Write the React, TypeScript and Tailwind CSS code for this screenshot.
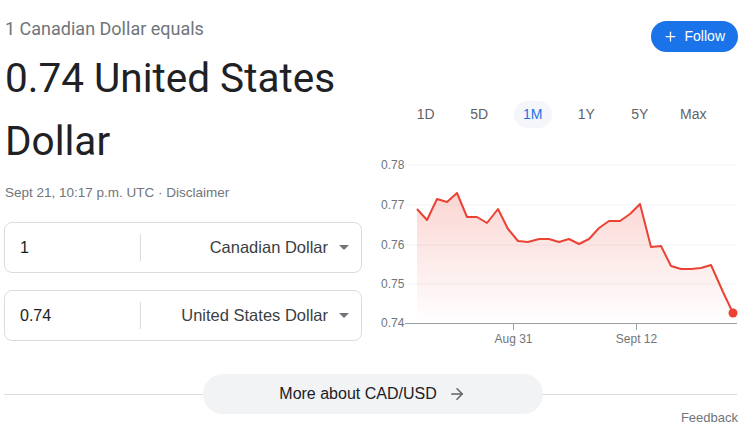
import { Plus, ArrowRight } from 'lucide-react';

const points: [number, number][] = [
  [417, 209], [427, 220], [437, 199], [447, 202], [457, 193], [467, 217],
  [477, 217], [487, 223], [498, 209], [508, 229], [518, 241], [528, 242],
  [539, 239], [549, 239], [559, 242], [569, 239], [579, 244], [589, 239],
  [599, 228], [609, 221], [620, 221], [630, 214], [640, 204], [651, 247],
  [661, 246], [671, 266], [681, 269], [691, 269], [701, 268], [711, 265],
  [723, 292], [733, 313],
];

const ranges = ['1D', '5D', '1M', '1Y', '5Y', 'Max'];

const Chart = () => {
  // svg origin sits at page (370,150)
  const pts = points.map(([x, y]) => [x - 370, y - 150]);
  const line = pts.map(([x, y], i) => `${i ? 'L' : 'M'}${x},${y}`).join(' ');
  const area = `${line} L${pts[pts.length - 1][0]},173 L${pts[0][0]},173 Z`;
  const grid = [
    { label: '0.78', y: 15 },
    { label: '0.77', y: 55 },
    { label: '0.76', y: 95 },
    { label: '0.75', y: 134 },
  ];
  return (
    <svg width="381" height="200" viewBox="0 0 381 200" className="block">
      <defs>
        <linearGradient id="fade" x1="0" y1="0" x2="0" y2="1">
          <stop offset="0" stopColor="#ea4335" stopOpacity="0.22" />
          <stop offset="1" stopColor="#ea4335" stopOpacity="0" />
        </linearGradient>
      </defs>
      {grid.map((g) => (
        <g key={g.label}>
          <line x1="35" x2="367" y1={g.y} y2={g.y} stroke="#f1f3f4" strokeWidth="1" />
          <text x="11" y={g.y + 4} fontSize="12" fill="#70757a" fontFamily="'Liberation Sans', Arial, sans-serif">
            {g.label}
          </text>
        </g>
      ))}
      <path d={area} fill="url(#fade)" />
      <path d={line} fill="none" stroke="#ea4335" strokeWidth="2" strokeLinejoin="round" />
      <circle cx="363" cy="163" r="4.5" fill="#ea4335" />
      <line x1="35" x2="367" y1="173.5" y2="173.5" stroke="#9aa0a6" strokeWidth="1" />
      <text x="11" y="177" fontSize="12" fill="#70757a" fontFamily="'Liberation Sans', Arial, sans-serif">0.74</text>
      <line x1="143.5" x2="143.5" y1="173" y2="180" stroke="#9aa0a6" />
      <line x1="266.5" x2="266.5" y1="173" y2="180" stroke="#9aa0a6" />
      <text x="143.5" y="193" textAnchor="middle" fontSize="12" fill="#70757a" fontFamily="'Liberation Sans', Arial, sans-serif">Aug 31</text>
      <text x="266.5" y="193" textAnchor="middle" fontSize="12" fill="#70757a" fontFamily="'Liberation Sans', Arial, sans-serif">Sept 12</text>
    </svg>
  );
};

const CurrencyRow = ({ value, currency }: { value: string; currency: string }) => (
  <div className="flex h-[51px] items-center rounded-lg border border-[#dadce0] bg-white">
    <div className="w-[135px] pl-[15px] text-[16px] text-[#202124]">{value}</div>
    <div className="h-[27px] w-px bg-[#dadce0]" />
    <div className="flex flex-1 items-center justify-end pr-[12px] text-[16.5px] text-[#3c4043]">
      <span>{currency}</span>
      <svg width="10" height="5" viewBox="0 0 10 5" className="ml-[11px]">
        <path d="M0 0 L10 0 L5 5 Z" fill="#70757a" />
      </svg>
    </div>
  </div>
);

export default function App() {
  return (
    <div className="relative h-[430px] w-[751px] overflow-hidden bg-white font-['Liberation_Sans',Arial,sans-serif]">
      <div className="flex">
        {/* left: rate + converter */}
        <div className="ml-[4px] w-[358px]">
          <div className="ml-[1px] pt-[19px] font-['Roboto',sans-serif] text-[18px] leading-[20px] text-[#70757a]">
            1 Canadian Dollar equals
          </div>
          <div className="ml-[1px] mt-[8px] font-['Roboto',sans-serif] text-[40.5px] leading-[63px] text-[#202124]">
            0.74 United States Dollar
          </div>
          <div className="ml-[1px] mt-[10px] text-[13.5px] leading-[20px] text-[#70757a]">
            Sept 21, 10:17 p.m. UTC · Disclaimer
          </div>
          <div className="mt-[19px] flex flex-col gap-[17px]">
            <CurrencyRow value="1" currency="Canadian Dollar" />
            <CurrencyRow value="0.74" currency="United States Dollar" />
          </div>
        </div>

        {/* right: follow, ranges, chart */}
        <div className="ml-[8px] flex-1">
          <div className="flex justify-end pr-[13px] pt-[21px]">
            <button className="flex h-[31px] items-center gap-[7px] rounded-full bg-[#1a73e8] pl-[12px] pr-[13px] text-[14px] text-white">
              <Plus size={15} strokeWidth={2} />
              Follow
            </button>
          </div>
          <div className="ml-[29px] mt-[49px] flex">
            {ranges.map((r) => (
              <div key={r} className="flex h-[27px] w-[53.5px] items-center justify-center text-[14px]">
                <span
                  className={`flex h-[27px] w-[38px] items-center justify-center rounded-full ${
                    r === '1M' ? 'bg-[#f4f6f9] text-[#1a73e8]' : 'text-[#5f6368]'
                  }`}
                >
                  {r}
                </span>
              </div>
            ))}
          </div>
          <div className="mt-[22px]">
            <Chart />
          </div>
        </div>
      </div>

      {/* footer */}
      <div className="relative mt-[24px] flex items-center justify-center px-[4px]">
        <div className="absolute left-[4px] right-[14px] top-1/2 h-px bg-[#dadce0]" />
        <button className="relative ml-[-6px] flex h-[40px] w-[340px] items-center justify-center gap-[11px] rounded-full bg-[#f1f3f4] text-[16px] text-[#202124]">
          More about CAD/USD
          <ArrowRight size={18} className="text-[#5f6368]" />
        </button>
      </div>
      <div className="mr-[13px] mt-[-6px] text-right text-[13px] text-[#70757a]">Feedback</div>
    </div>
  );
}
